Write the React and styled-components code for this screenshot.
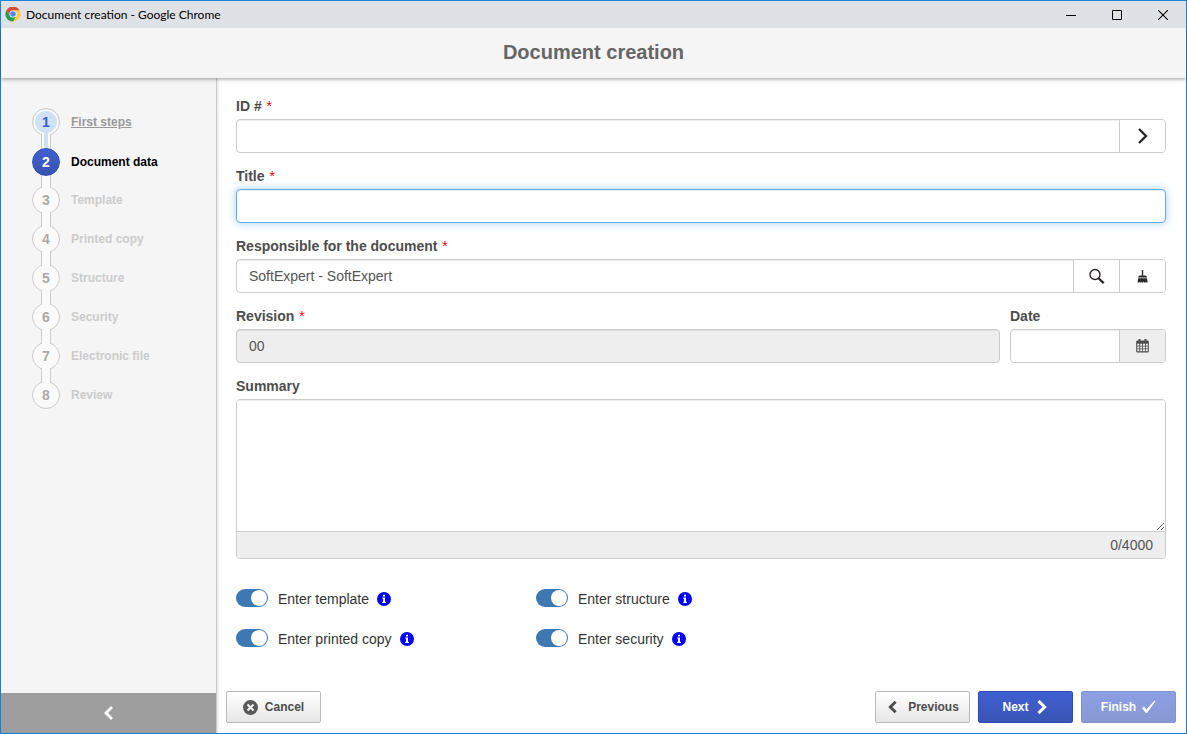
import React, { useState } from "react";
import styled, { createGlobalStyle, css } from "styled-components";

const steps = [
  { label: "First steps", state: "done" },
  { label: "Document data", state: "active" },
  { label: "Template" },
  { label: "Printed copy" },
  { label: "Structure" },
  { label: "Security" },
  { label: "Electronic file" },
  { label: "Review" },
];

const options = [
  { id: "template", label: "Enter template" },
  { id: "structure", label: "Enter structure" },
  { id: "printed-copy", label: "Enter printed copy" },
  { id: "security", label: "Enter security" },
];

function ChromeLogo() {
  return (
    <svg width="16" height="16" viewBox="0 0 16 16" aria-hidden="true">
      <circle cx="8" cy="7" r="7.5" fill="#fc4" />
      <path d="M8 7 1.5 3.25A7.5 7.5 0 0 1 14.5 3.25H8Z" fill="#dc4b3e" />
      <path d="M1.5 3.25 4.8 8.9 8 7V3.25Z" fill="#dc4b3e" />
      <path d="M1.5 3.25A7.5 7.5 0 0 0 8 14.5L11.3 8.8 8 10.4 4.8 8.9Z" fill="#1a9f5c" />
      <circle cx="8" cy="7" r="3.6" fill="#fff" />
      <circle cx="8" cy="7" r="2.8" fill="#4688f4" />
    </svg>
  );
}

function Chevron({ size = 16, left, weight = 2 }) {
  return (
    <svg width={size} height={size} viewBox="0 0 16 16" fill="none" stroke="currentColor" strokeWidth={weight} aria-hidden="true">
      <path d={left ? "M11 2 5 8l6 6" : "M4 1l7 7-7 7"} />
    </svg>
  );
}

function SearchIcon() {
  return (
    <svg width="16" height="16" viewBox="0 0 16 16" fill="none" stroke="currentColor" aria-hidden="true">
      <circle cx="6" cy="6.500" r="5" strokeWidth="1.4" />
      <path d="m9.500 10.300 5.200 4.800" strokeWidth="2.200" />
    </svg>
  );
}

function BroomIcon() {
  return (
    <svg width="12" height="14" viewBox="0 0 12 14" fill="currentColor" aria-hidden="true">
      <path d="M4.800 1h1.400v5.500h2c1 0 1.800.8 1.800 1.900H1.200C1.200 7.300 2 6.500 3 6.500h1.800Z" />
      <path d="M1.200 9.300h8.800l.6 4.200H9.200l-.4-1.300v1.300H7.100l-.3-1.300-.4 1.300H4.700v-1.300l-.7 1.300H2.500l.2-1.300-.8 1.300H.5Z" />
    </svg>
  );
}

function CalendarIcon() {
  return (
    <svg width="14" height="14" viewBox="0 0 14 14" aria-hidden="true">
      <path fill="currentColor" d="M1 1.500h1.500V0h2v1.500h4V0h2v1.500H12l.8.8v10.400l-.8.8H1l-.8-.8V2.300Z" />
      <path fill="#eee" d="M1.300 4.700h2v2h-2zM4.200 4.700h2v2h-2zM7 4.700h2v2H7zM9.800 4.700h2v2h-2zM1.300 7.500h2v2h-2zM4.200 7.500h2v2h-2zM7 7.500h2v2H7zM9.800 7.500h2v2h-2zM1.300 10.300h2v2h-2zM4.200 10.300h2v2h-2zM7 10.300h2v2H7zM9.800 10.300h2v2h-2z" />
    </svg>
  );
}

function InfoIcon() {
  return (
    <svg width="14" height="14" viewBox="0 0 14 14" aria-hidden="true">
      <circle cx="7" cy="7" r="7" fill="#00f" />
      <path fill="#fff" d="M6 2.800h2v1.700H6zM5.300 5.500H8v4.200h.9v1.200H5.200V9.700H6v-3h-.7z" />
    </svg>
  );
}

function CancelIcon() {
  return (
    <svg width="16" height="16" viewBox="0 0 16 16" aria-hidden="true">
      <circle cx="7.500" cy="8.500" r="7.500" fill="#5a5a5a" />
      <path d="m4.500 5.500 6 6m0-6-6 6" stroke="#f5f5f5" strokeWidth="2" />
    </svg>
  );
}

function CheckIcon() {
  return (
    <svg width="14" height="14" viewBox="0 0 14 14" aria-hidden="true">
      <path d="M0 8.200 2 6.600l2.400 3L12.600.5l1 .4L5 13H4Z" fill="currentColor" />
    </svg>
  );
}

function Required() {
  return <Asterisk aria-hidden="true">*</Asterisk>;
}

function Option({ id, label }) {
  const [on, setOn] = useState(true);
  return (
    <OptionRow>
      <Switch id={id} type="checkbox" checked={on} onChange={() => setOn(!on)} />
      <label htmlFor={id}>{label}</label>
      <InfoIcon />
    </OptionRow>
  );
}

function App() {
  const [summary, setSummary] = useState("");

  return (
    <Window>
      <GlobalStyle />
      <TitleBar>
        <ChromeLogo />
        <WindowTitle>Document creation - Google Chrome</WindowTitle>
        <WindowButton aria-label="Minimize">
          <svg width="10" height="10" viewBox="0 0 10 10"><path d="M0 5.500h10" stroke="#000" /></svg>
        </WindowButton>
        <WindowButton aria-label="Maximize">
          <svg width="10" height="10" viewBox="0 0 10 10"><path d="M.5.5h9v9h-9z" fill="none" stroke="#000" /></svg>
        </WindowButton>
        <WindowButton aria-label="Close">
          <svg width="10" height="10" viewBox="0 0 10 10"><path d="m0 0 10 10M10 0 0 10" stroke="#000" strokeWidth="1.100" /></svg>
        </WindowButton>
      </TitleBar>
      <Header>
        <h1>Document creation</h1>
      </Header>
      <Body>
        <Sidebar>
          <StepList>
            {steps.map(({ label, state }, i) => (
              <Step key={label} $state={state}>
                <Marker>
                  <Circle $state={state}>{i + 1}</Circle>
                  {i < steps.length - 1 && <Connector $done={state === "done"} />}
                </Marker>
                {state === "done" ? (
                  <StepLink href="#first-steps">{label}</StepLink>
                ) : (
                  <StepLabel $active={state === "active"}>{label}</StepLabel>
                )}
              </Step>
            ))}
          </StepList>
          <Collapse aria-label="Collapse menu">
            <Chevron left weight={2.8} />
          </Collapse>
        </Sidebar>
        <Main>
          <Form>
            <Field>
              <Label htmlFor="doc-id">ID # <Required /></Label>
              <InputGroup>
                <Input id="doc-id" />
                <Addon type="button" aria-label="Generate ID" $dark><Chevron weight={2.4} /></Addon>
              </InputGroup>
            </Field>
            <Field>
              <Label htmlFor="title">Title <Required /></Label>
              <InputGroup $focused>
                <Input id="title" />
              </InputGroup>
            </Field>
            <Field>
              <Label htmlFor="responsible">Responsible for the document <Required /></Label>
              <InputGroup>
                <Input id="responsible" defaultValue="SoftExpert - SoftExpert" />
                <Addon type="button" aria-label="Search" $dark><SearchIcon /></Addon>
                <Addon type="button" aria-label="Clear" $dark><BroomIcon /></Addon>
              </InputGroup>
            </Field>
            <FieldRow>
              <Field>
                <Label htmlFor="revision">Revision <Required /></Label>
                <InputGroup $filled>
                  <Input id="revision" defaultValue="00" readOnly />
                </InputGroup>
              </Field>
              <Field>
                <Label htmlFor="date">Date</Label>
                <InputGroup>
                  <Input id="date" />
                  <Addon type="button" aria-label="Open calendar" $filled><CalendarIcon /></Addon>
                </InputGroup>
              </Field>
            </FieldRow>
            <Field>
              <Label htmlFor="summary">Summary</Label>
              <SummaryBox>
                <TextArea
                  id="summary"
                  maxLength={4000}
                  value={summary}
                  onChange={(e) => setSummary(e.target.value)}
                />
                <Counter>{summary.length}/4000</Counter>
              </SummaryBox>
            </Field>
            <Options>
              {options.map((option) => (
                <Option key={option.id} {...option} />
              ))}
            </Options>
          </Form>
          <Footer>
            <Button type="button"><CancelIcon />Cancel</Button>
            <Actions>
              <Button type="button" $spaced><Chevron size={14} left weight={3.4} />Previous</Button>
              <Button type="button" $primary>Next<Chevron size={14} weight={3.4} /></Button>
              <Button type="button" $primary disabled>Finish<CheckIcon /></Button>
            </Actions>
          </Footer>
        </Main>
      </Body>
    </Window>
  );
}

export default App;

const GlobalStyle = createGlobalStyle`
  * {
    box-sizing: border-box;
  }

  body {
    margin: 0;
    font-family: "Liberation Sans", Arial, sans-serif;
    font-size: 14px;
    color: #333;
  }

  button, input, textarea {
    font: inherit;
    color: inherit;
    margin: 0;
  }

  svg {
    display: block;
    flex: none;
  }
`;

const Window = styled.div`
  min-height: 100vh;
  display: flex;
  flex-direction: column;
  border: 1px solid #1883d7;
  background: #fff;
`;

const TitleBar = styled.div`
  position: relative;
  z-index: 3;
  display: flex;
  align-items: center;
  height: 27px;
  padding-left: 4px;
  background: #dee1e6;
`;

const WindowTitle = styled.span`
  flex: 1;
  padding-left: 5px;
  font-family: Lato, "Open Sans", sans-serif;
  font-size: 12px;
  color: #000;
`;

const WindowButton = styled.button`
  display: flex;
  align-items: center;
  justify-content: center;
  width: 46px;
  height: 27px;
  padding: 0;
  border: 0;
  background: none;
`;

const Header = styled.header`
  position: relative;
  z-index: 2;
  display: flex;
  align-items: center;
  justify-content: center;
  height: 50px;
  background: #f5f5f5;
  box-shadow: 0 1px 4px rgba(0, 0, 0, 0.4);

  h1 {
    margin: 0;
    padding-bottom: 2px;
    font-size: 20px;
    line-height: 24px;
    color: #666;
  }
`;

const Body = styled.div`
  flex: 1;
  display: flex;
`;

const Sidebar = styled.aside`
  display: flex;
  flex-direction: column;
  justify-content: space-between;
  width: 216px;
  border-right: 1px solid #ccc;
  background: #f5f5f5;
  box-shadow: 1px 0 2px rgba(0, 0, 0, 0.12);
`;

const StepList = styled.ol`
  margin: 0;
  padding: 30px 0 0 31px;
  list-style: none;
`;

const stepHeights = { done: 40, active: 38 };

const Step = styled.li`
  display: flex;
  gap: 11px;
  height: ${(props) => stepHeights[props.$state] || 39}px;
  font-size: 12px;
  font-weight: bold;
  line-height: 28px;
`;

const Marker = styled.div`
  display: flex;
  flex-direction: column;
  align-items: center;
`;

const Circle = styled.span`
  display: flex;
  align-items: center;
  justify-content: center;
  flex: none;
  width: 28px;
  height: 28px;
  border: 1px solid #ccc;
  border-radius: 50%;
  background: #fafafa;
  font-size: 14px;
  color: #aaa;

  ${(props) =>
    props.$state === "done" &&
    css`
      background: #cfe2f3;
      box-shadow: inset 0 0 0 2px #fafafa;
      color: #3c5bcb;
    `}

  ${(props) =>
    props.$state === "active" &&
    css`
      position: relative;
      z-index: 2;
      border-color: #3450b0;
      background: linear-gradient(#3f60d2, #3753b0);
      color: #fff;
    `}
`;

const Connector = styled.span`
  position: relative;
  z-index: 1;
  flex: 1;
  width: 10px;
  margin: -2px 0;
  border: 1px solid #ccc;
  border-width: 0 1px;
  background: #fafafa;

  ${(props) =>
    props.$done &&
    css`
      &::after {
        content: "";
        position: absolute;
        inset: -2px 2px 0;
        background: #cfe2f3;
      }
    `}
`;

const StepLabel = styled.span`
  color: ${(props) => (props.$active ? "#000" : "#ccc")};
`;

const StepLink = styled.a`
  color: #999;
`;

const Collapse = styled.button`
  display: flex;
  align-items: center;
  justify-content: center;
  height: 40px;
  border: 0;
  background: #9e9e9e;
  color: #fff;
`;

const Main = styled.main`
  flex: 1;
  display: flex;
  flex-direction: column;
  justify-content: space-between;
  min-width: 0;
`;

const Form = styled.form`
  display: flex;
  flex-direction: column;
  gap: 13px;
  padding: 18px 20px 0 19px;
`;

const Field = styled.div`
  display: flex;
  flex-direction: column;
  gap: 3px;
  min-width: 0;
`;

const FieldRow = styled.div`
  display: grid;
  grid-template-columns: 1fr 156px;
  gap: 10px;
`;

const Label = styled.label`
  line-height: 20px;
  font-weight: bold;
  color: #4d4d4d;
`;

const Asterisk = styled.span`
  padding-left: 1px;
  font-weight: normal;
  color: #f00;
`;

const InputGroup = styled.div`
  display: flex;
  height: 34px;
  border: 1px solid #ccc;
  border-radius: 4px;
  overflow: hidden;
  background: ${(props) => (props.$filled ? "#eee" : "#fff")};
  box-shadow: inset 0 1px 1px rgba(0, 0, 0, 0.075);

  ${(props) =>
    props.$focused &&
    css`
      border-color: #66afe9;
      box-shadow: inset 0 1px 1px rgba(0, 0, 0, 0.075), 0 0 8px rgba(102, 175, 233, 0.6);
    `}
`;

const Input = styled.input`
  flex: 1;
  min-width: 0;
  padding: 0 12px;
  border: 0;
  outline: 0;
  background: transparent;
  color: #555;
`;

const Addon = styled.button`
  display: flex;
  align-items: center;
  justify-content: center;
  width: 46px;
  padding: 0;
  border: 0;
  border-left: 1px solid #ccc;
  background: ${(props) => (props.$filled ? "#eee" : "#fff")};
  color: ${(props) => (props.$dark ? "#2b2626" : "#4d4d4d")};
`;

const SummaryBox = styled.div`
  display: flex;
  flex-direction: column;
  border: 1px solid #ccc;
  border-radius: 4px;
  overflow: hidden;
`;

const TextArea = styled.textarea`
  height: 131px;
  padding: 6px 12px;
  border: 0;
  outline: 0;
  resize: vertical;
  color: #555;
  box-shadow: inset 0 1px 1px rgba(0, 0, 0, 0.075);
`;

const Counter = styled.div`
  padding: 3px 12px;
  border-top: 1px solid #ccc;
  background: #eee;
  line-height: 20px;
  text-align: right;
  color: #555;
`;

const Options = styled.div`
  display: grid;
  grid-template-columns: 300px 300px;
  row-gap: 20px;
  padding-top: 17px;
`;

const OptionRow = styled.div`
  display: flex;
  align-items: center;
  height: 20px;

  label {
    padding: 0 8px 0 10px;
  }
`;

const Switch = styled.input`
  appearance: none;
  display: flex;
  align-items: center;
  align-self: flex-start;
  width: 32px;
  height: 18px;
  padding: 0 1px;
  border-radius: 9px;
  background: #3d78b3;

  &::before {
    content: "";
    width: 16px;
    height: 16px;
    border-radius: 50%;
    background: #fff;
  }

  &:checked {
    justify-content: flex-end;
  }

  &:not(:checked) {
    background: #bbb;
  }
`;

const Footer = styled.footer`
  display: flex;
  justify-content: space-between;
  padding: 10px 10px 10px 9px;
`;

const Actions = styled.div`
  display: flex;
  gap: 8px;
`;

const Button = styled.button`
  display: flex;
  align-items: center;
  justify-content: center;
  gap: ${(props) => (props.$spaced ? "8px" : "6px")};
  width: 95px;
  height: 32px;
  padding: 0;
  border: 1px solid #bbb;
  border-radius: 2px;
  background: linear-gradient(#fff, #e6e6e6);
  font-size: 12px;
  font-weight: bold;
  color: #4d4d4d;

  ${(props) =>
    props.$primary &&
    css`
      border-color: #2f4bad;
      background: linear-gradient(#3f60d2, #3a55b5);
      color: #fff;
    `}

  &:disabled {
    opacity: 0.6;
  }
`;
